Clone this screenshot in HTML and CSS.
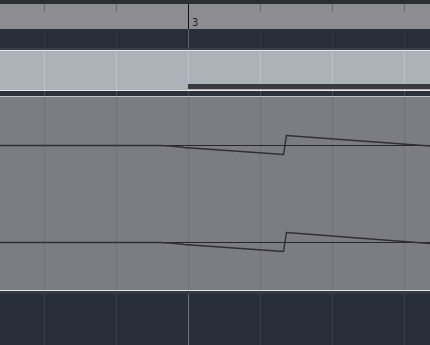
FILE: index.html
```html
<!DOCTYPE html>
<html lang="en">
<head>
  <meta charset="UTF-8" />
  <title>Arranger lane</title>
  <link rel="stylesheet" href="styles.css">
</head>
<body>
  <div class="arranger">
    <div class="topbar"></div>
    <div class="ruler">
      <span class="bar-num">3</span>
    </div>
    <div class="track dark"></div>
    <div class="sep-dark"></div>
    <div class="edge"></div>
    <div class="clip">
      <div class="clip-bar"></div>
    </div>
    <div class="edge"></div>
    <div class="gap"></div>
    <div class="edge dim"></div>
    <div class="lane">
      <svg class="curves" width="430" height="193" viewBox="0 98 430 193">
        <line x1="0" y1="146.5" x2="430" y2="146.5" />
        <path d="M0 146.5 L160 146.5 C170 146.5 176 147.5 184 148.5 L283.5 155.5 L286.5 136.5 L430 147" />
        <line x1="0" y1="243.5" x2="430" y2="243.5" />
        <path d="M0 243.5 L160 243.5 C170 243.5 176 244.5 184 245.5 L283.5 252.5 L286.5 233.5 L430 244.5" />
      </svg>
    </div>
    <div class="edge"></div>
    <div class="track bottom"></div>
  </div>
</body>
</html>
```

FILE: styles.css
```css
body {
  margin: 0;
  background: #272e38;
  font-family: "DejaVu Sans", sans-serif;
  overflow: hidden;
}

.arranger {
  width: 430px;
  height: 345px;
  display: flex;
  flex-direction: column;
  position: relative;
}

.topbar {
  height: 4px;
  background: #2a2d31;
}

/* ruler with short ticks every 72px and the playhead */
.ruler {
  height: 25px;
  position: relative;
  background:
    linear-gradient(to right, #111 1px, transparent 1px) 188px 0 / 1px 100% no-repeat,
    linear-gradient(to right, #6d6e72 1px, transparent 1px) 44px 0 / 72px 8px repeat-x,
    #8c8d90;
}

.bar-num {
  position: absolute;
  left: 192px;
  top: 13px;
  font-size: 10px;
  line-height: 12px;
  color: #1e1f22;
}

.track.dark {
  height: 19px;
  background:
    linear-gradient(to right, #5e636b 1px, transparent 1px) 188px 0 / 1px 100% no-repeat,
    linear-gradient(to right, #343a44 1px, transparent 1px) 44px 0 / 72px 100% repeat-x,
    #272e38;
}

.sep-dark {
  height: 2px;
  background: #3a3f47;
}

.edge {
  height: 1px;
  background: #e4e6e9;
}

.edge.dim {
  background: #bfc2c6;
}

.clip {
  height: 39px;
  position: relative;
  background:
    linear-gradient(to right, #bcc1c8 1px, transparent 1px) 44px 0 / 72px 100% repeat-x,
    #adb2b9;
}

.clip-bar {
  position: absolute;
  left: 188px;
  right: 0;
  bottom: 1px;
  height: 5px;
  background: #3a3b3f;
}

.gap {
  height: 5px;
  background:
    linear-gradient(to right, #4a4f57 1px, transparent 1px) 44px 0 / 72px 100% repeat-x,
    #2d323a;
}

.lane {
  height: 193px;
  background:
    linear-gradient(to right, #6d7075 1px, transparent 1px) 44px 0 / 72px 100% repeat-x,
    #7a7d82;
}

.curves {
  display: block;
}

.curves line {
  stroke: #26282c;
  stroke-width: 1;
}

.curves path {
  fill: none;
  stroke: #2e3034;
  stroke-width: 1.4;
  stroke-linejoin: miter;
}

.track.bottom {
  flex: 1;
  background:
    linear-gradient(to bottom, #333a44 3px, transparent 3px),
    linear-gradient(to right, #6b7079 1px, transparent 1px) 188px 0 / 1px 100% no-repeat,
    linear-gradient(to right, #39404a 1px, transparent 1px) 44px 0 / 72px 100% repeat-x,
    #282f39;
}
```
